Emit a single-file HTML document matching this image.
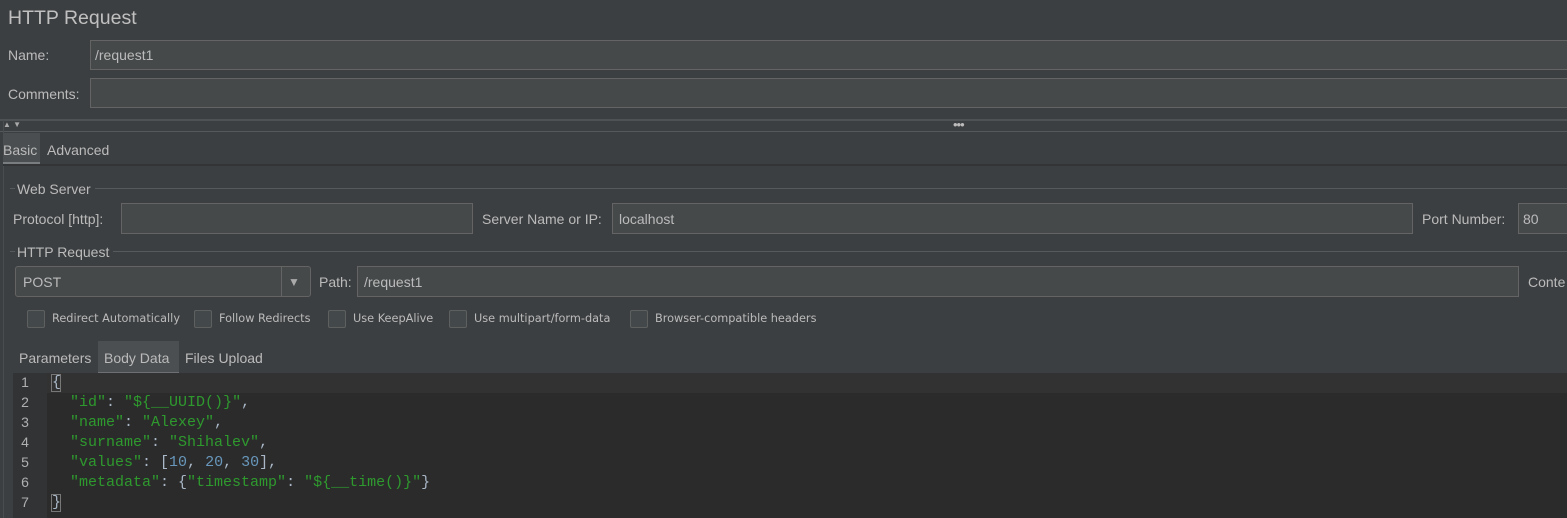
<!DOCTYPE html>
<html><head><meta charset="utf-8"><style>
*{margin:0;padding:0;box-sizing:border-box}
body{width:1567px;height:518px;background:#3c3f41;position:relative;overflow:hidden;font-family:"Liberation Sans",sans-serif;color:#bbbbbb;font-size:14px}
.a{position:absolute;white-space:nowrap}
.f{position:absolute;background:#45494a;border:1px solid #646464}
.ln{position:absolute;height:1px;background:#555a5c}
.cb{position:absolute;width:18px;height:18px;border:1px solid #5e6060;border-radius:2px;background:#43494a;top:310px}
.cl{position:absolute;top:312px;font-family:"DejaVu Sans",sans-serif;font-size:11.3px;color:#bbbbbb}
.code{position:absolute;left:52px;font-family:"Liberation Mono",monospace;font-size:15px;color:#a9b7c6;white-space:pre;line-height:20px}
.s{color:#2e9a2e}.n{color:#6897bb}
.num{position:absolute;left:13px;width:24px;text-align:center;font-size:14px;color:#b0b0b0;line-height:20px}
</style></head><body>
<div class="a" style="left:8px;top:7px;font-size:19.5px;color:#c0c0c0">HTTP Request</div>
<div class="a" style="left:8px;top:47px">Name:</div>
<div class="f" style="left:90px;top:40px;width:1480px;height:30px"></div>
<div class="a" style="left:95px;top:47px">/request1</div>
<div class="a" style="left:8px;top:86px">Comments:</div>
<div class="f" style="left:90px;top:78px;width:1480px;height:30px"></div>
<div class="ln" style="left:0;top:119px;width:1567px;height:2px;background:#4e5254"></div>
<div class="ln" style="left:0;top:131px;width:1567px;background:#55595b"></div>
<div class="a" style="left:3px;top:120px;font-size:8px;color:#aaa">▲ ▼</div>
<div class="a" style="left:953px;top:117px;font-size:13px;color:#bbb;letter-spacing:-1px">•••</div>
<div style="position:absolute;left:3px;top:120px;width:1px;height:398px;background:#4a4d4f"></div>
<div style="position:absolute;left:3px;top:133px;width:37px;height:32px;background:#4a4e50;border-bottom:3px solid #7a7d80"></div>
<div class="a" style="left:3px;top:142px">Basic</div>
<div class="a" style="left:47px;top:142px">Advanced</div>
<div class="ln" style="left:3px;top:164px;width:1567px;background:#323435;height:2px"></div>
<div class="ln" style="left:10px;top:188px;width:5px"></div>
<div class="a" style="left:17px;top:181px">Web Server</div>
<div class="ln" style="left:95px;top:188px;width:1480px"></div>
<div class="a" style="left:13px;top:211px">Protocol [http]:</div>
<div class="f" style="left:121px;top:203px;width:352px;height:31px"></div>
<div class="a" style="left:482px;top:211px">Server Name or IP:</div>
<div class="f" style="left:612px;top:203px;width:801px;height:31px"></div>
<div class="a" style="left:619px;top:211px">localhost</div>
<div class="a" style="left:1422px;top:211px">Port Number:</div>
<div class="f" style="left:1518px;top:203px;width:60px;height:31px"></div>
<div class="a" style="left:1523px;top:211px">80</div>
<div class="ln" style="left:10px;top:251px;width:5px"></div>
<div class="a" style="left:17px;top:244px">HTTP Request</div>
<div class="ln" style="left:113px;top:251px;width:1460px"></div>
<div class="f" style="left:15px;top:266px;width:296px;height:31px;border-radius:3px"></div>
<div style="position:absolute;left:281px;top:267px;width:1px;height:29px;background:#646464"></div>
<div class="a" style="left:23px;top:274px">POST</div>
<div class="a" style="left:288px;top:275px;font-size:12px;color:#aaa">▼</div>
<div class="a" style="left:319px;top:274px">Path:</div>
<div class="f" style="left:357px;top:266px;width:1162px;height:31px"></div>
<div class="a" style="left:364px;top:274px">/request1</div>
<div class="a" style="left:1528px;top:274px">Conte</div>
<div class="cb" style="left:27px"></div><div class="cl" style="left:52px">Redirect Automatically</div>
<div class="cb" style="left:194px"></div><div class="cl" style="left:219px">Follow Redirects</div>
<div class="cb" style="left:328px"></div><div class="cl" style="left:353px">Use KeepAlive</div>
<div class="cb" style="left:449px"></div><div class="cl" style="left:474px">Use multipart/form-data</div>
<div class="cb" style="left:630px"></div><div class="cl" style="left:655px">Browser-compatible headers</div>
<div style="position:absolute;left:98px;top:341px;width:81px;height:33px;background:#4b4f51;border-bottom:2px solid #6c7073"></div>
<div class="a" style="left:19px;top:350px">Parameters</div>
<div class="a" style="left:104px;top:350px">Body Data</div>
<div class="a" style="left:185px;top:350px">Files Upload</div>
<div style="position:absolute;left:13px;top:373px;width:1554px;height:145px;background:#2b2b2b"></div>
<div style="position:absolute;left:13px;top:373px;width:1554px;height:20px;background:#323232"></div>
<div style="position:absolute;left:13px;top:373px;width:34px;height:145px;background:#313335"></div>
<div class="num" style="top:372px">1<br>2<br>3<br>4<br>5<br>6<br>7</div>
<div class="code" style="top:373px">{
  <span class="s">"id"</span>: <span class="s">"${__UUID()}"</span>,
  <span class="s">"name"</span>: <span class="s">"Alexey"</span>,
  <span class="s">"surname"</span>: <span class="s">"Shihalev"</span>,
  <span class="s">"values"</span>: [<span class="n">10</span>, <span class="n">20</span>, <span class="n">30</span>],
  <span class="s">"metadata"</span>: {<span class="s">"timestamp"</span>: <span class="s">"${__time()}"</span>}
}</div>
<div style="position:absolute;left:51px;top:374px;width:10px;height:18px;border:1px solid #777"></div>
<div style="position:absolute;left:51px;top:494px;width:10px;height:18px;border:1px solid #777"></div>
</body></html>
